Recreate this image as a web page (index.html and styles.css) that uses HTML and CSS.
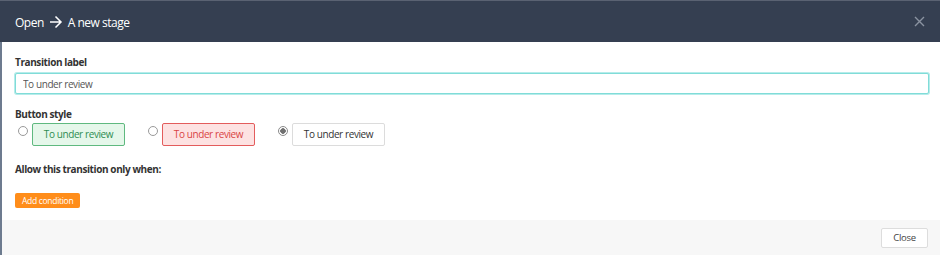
FILE: index.html
```html
<!DOCTYPE html>
<html lang="en">
  <head>
    <meta charset="UTF-8" />
    <title>Transition</title>
    <link rel="stylesheet" href="styles.css">
  </head>
  <body>
    <div class="modal">
      <header class="modal-header">
        <h1>Open
          <svg class="arrow" width="14" height="14" viewBox="0 0 14 14">
            <path d="M1 7h11.5M6.5 1.5l5.5 5.5-5.5 5.5" fill="none" stroke="#fff" stroke-width="1.5" />
          </svg>
          A new stage</h1>
        <svg class="close-x" width="11" height="11" viewBox="0 0 11 11">
          <path d="M1 1l9 9M10 1l-9 9" stroke="#8b93a1" stroke-width="1.4" />
        </svg>
      </header>
      <main class="modal-body">
        <label class="field-label" for="label">Transition label</label>
        <input type="text" id="label" class="text-input" value="To under review" />

        <div class="field-label">Button style</div>
        <div class="styles-row">
          <label class="style-option">
            <input type="radio" name="style" />
            <span class="preview green">To under review</span>
          </label>
          <label class="style-option">
            <input type="radio" name="style" />
            <span class="preview red">To under review</span>
          </label>
          <label class="style-option">
            <input type="radio" name="style" checked />
            <span class="preview plain">To under review</span>
          </label>
        </div>

        <div class="field-label">Allow this transition only when:</div>
        <button class="add-btn">Add condition</button>
      </main>
      <footer class="modal-footer">
        <button class="close-btn">Close</button>
      </footer>
    </div>
  </body>
</html>
```

FILE: styles.css
```css
body {
  margin: 0;
  font-family: "Open Sans", Arial, sans-serif;
  color: #333;
  background: #fff;
  letter-spacing: -0.4px;
}

.modal {
  width: 940px;
  height: 255px;
  display: flex;
  flex-direction: column;
  border-left: 2px solid #6d7b8f;
  box-sizing: border-box;
}

.modal-header {
  height: 42px;
  background-color: #353f51;
  border-top: 1px solid #5a6272;
  margin-left: -2px;
  padding: 0 15px;
  display: flex;
  align-items: center;
  justify-content: space-between;
  box-sizing: border-box;
}

.modal-header h1 {
  margin: 0 0 -1px;
  font-size: 12px;
  font-weight: 400;
  letter-spacing: -0.5px;
  color: #fff;
  display: flex;
  align-items: center;
  gap: 5px;
}

.modal-body {
  flex: 1;
  padding: 13px 11px 0 13px;
}

.field-label {
  display: block;
  font-size: 10px;
  font-weight: 700;
  color: #333;
  margin-bottom: 4px;
}

.text-input {
  display: block;
  width: 100%;
  height: 21px;
  box-sizing: border-box;
  border: 1px solid #80dcd8;
  box-shadow: 0 0 0 1px #b6ecea;
  border-radius: 2px;
  padding: 0 7px;
  font-family: inherit;
  font-size: 10px;
  letter-spacing: -0.4px;
  color: #555;
  margin-bottom: 13px;
  outline: none;
}

.styles-row {
  display: flex;
  gap: 23px;
  padding-left: 3px;
  margin-top: -2px;
  margin-bottom: 16px;
}

.style-option {
  display: flex;
  align-items: flex-start;
  gap: 4px;
}

.style-option input {
  appearance: none;
  margin: 3px 0 0;
  width: 10px;
  height: 10px;
  border: 1px solid #9a9a9a;
  border-radius: 50%;
  background: #fff;
  box-sizing: border-box;
}

.style-option input:checked {
  background: radial-gradient(circle, #707070 0 2.5px, #fff 3px);
  border-color: #8a8a8a;
}

.preview {
  display: inline-block;
  width: 93px;
  height: 23px;
  box-sizing: border-box;
  line-height: 21px;
  text-align: center;
  font-size: 10px;
  border-radius: 2px;
  border: 1px solid #ddd;
}

.preview.green {
  background: #e5f7ea;
  border-color: #5fb97f;
  color: #2f8d52;
}

.preview.red {
  background: #fde2e2;
  border-color: #e35c5c;
  color: #d94444;
}

.preview.plain {
  background: #fff;
  border-color: #dcdcdc;
  color: #333;
}

.add-btn {
  margin-top: 13px;
  background: #ff8d1a;
  color: #fff;
  border: none;
  border-radius: 2px;
  font-family: inherit;
  font-size: 8.5px;
  letter-spacing: -0.3px;
  height: 15px;
  padding: 0 7px;
}

.modal-footer {
  height: 35px;
  background: #f7f7f7;
  display: flex;
  justify-content: flex-end;
  align-items: center;
  padding: 0 12px;
}

.close-btn {
  background: #fff;
  border: 1px solid #ddd;
  border-radius: 2px;
  font-family: inherit;
  font-size: 9.5px;
  letter-spacing: -0.3px;
  color: #444;
  width: 47px;
  height: 20px;
}
```
